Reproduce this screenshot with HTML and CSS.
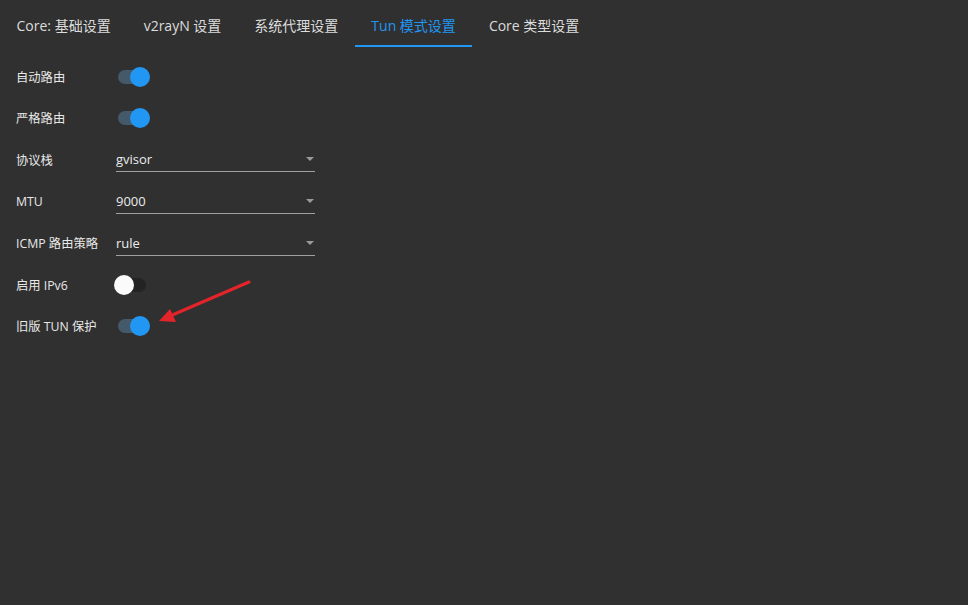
FILE: index.html
```html
<!DOCTYPE html>
<html lang="zh-CN">
<head>
  <meta charset="UTF-8" />
  <meta name="viewport" content="width=device-width, initial-scale=1" />
  <title>Tun 模式设置</title>
  <link rel="stylesheet" href="styles.css">
</head>
<body>
  <nav class="tabs">
    <div class="tab">Core: 基础设置</div>
    <div class="tab">v2rayN 设置</div>
    <div class="tab">系统代理设置</div>
    <div class="tab active">Tun 模式设置</div>
    <div class="tab">Core 类型设置</div>
  </nav>

  <main class="settings">
    <div class="row">
      <label class="label">自动路由</label>
      <div class="toggle on"><span class="track"></span><span class="thumb"></span></div>
    </div>
    <div class="row">
      <label class="label">严格路由</label>
      <div class="toggle on"><span class="track"></span><span class="thumb"></span></div>
    </div>
    <div class="row">
      <label class="label">协议栈</label>
      <div class="select"><span class="value">gvisor</span><span class="caret"></span></div>
    </div>
    <div class="row">
      <label class="label">MTU</label>
      <div class="select"><span class="value">9000</span><span class="caret"></span></div>
    </div>
    <div class="row">
      <label class="label">ICMP 路由策略</label>
      <div class="select"><span class="value">rule</span><span class="caret"></span></div>
    </div>
    <div class="row">
      <label class="label">启用 IPv6</label>
      <div class="toggle"><span class="track"></span><span class="thumb"></span></div>
    </div>
    <div class="row">
      <label class="label">旧版 TUN 保护</label>
      <div class="toggle on"><span class="track"></span><span class="thumb"></span></div>
    </div>
  </main>

  <!-- annotation arrow drawn over the screenshot -->
  <svg class="pointer" width="968" height="605" viewBox="0 0 968 605">
    <line x1="249" y1="282" x2="170" y2="316" stroke="#e3242b" stroke-width="3" stroke-linecap="round" />
    <polygon points="159,321 170,309 176,322" fill="#e3242b" />
  </svg>
</body>
</html>
```

FILE: styles.css
```css
body {
  margin: 0;
  width: 968px;
  height: 605px;
  background-color: #303030;
  color: #e6e6e6;
  font-family: "Open Sans", "Noto Sans CJK SC", sans-serif;
  position: relative;
  overflow: hidden;
}

.tabs {
  display: flex;
  height: 48px;
}

.tab {
  display: flex;
  align-items: center;
  justify-content: center;
  padding: 4px 16.5px 0;
  font-size: 14px;
  color: #dcdcdc;
  border-bottom: 2px solid transparent;
  box-sizing: border-box;
  height: 47px;
  white-space: nowrap;
}

.tab.active {
  color: #2196f3;
  border-bottom-color: #2196f3;
}

.settings {
  padding: 8px 0 0 16px;
}

.row {
  display: flex;
  align-items: center;
  height: 41.6px;
}

.label {
  width: 100px;
  font-size: 12.3px;
  color: #e8e8e8;
}

.toggle {
  position: relative;
  width: 36px;
  height: 20px;
  margin-left: -2px;
}

.toggle .track {
  position: absolute;
  left: 4px;
  top: 3px;
  width: 28px;
  height: 14px;
  border-radius: 7px;
  background-color: #232323;
}

.toggle .thumb {
  position: absolute;
  left: 0;
  top: 0;
  width: 20px;
  height: 20px;
  border-radius: 50%;
  background-color: #fafafa;
}

.toggle.on .track {
  background-color: #44596a;
}

.toggle.on .thumb {
  left: 16px;
  background-color: #2196f3;
}

.select {
  display: flex;
  align-items: center;
  justify-content: space-between;
  width: 199px;
  height: 24px;
  border-bottom: 1px solid #a0a0a0;
  font-size: 13px;
  color: #ececec;
}

.caret {
  width: 0;
  height: 0;
  margin-right: 1px;
  border-left: 4px solid transparent;
  border-right: 4px solid transparent;
  border-top: 4px solid #9a9a9a;
}

.pointer {
  position: absolute;
  left: 0;
  top: 0;
  pointer-events: none;
}
```
